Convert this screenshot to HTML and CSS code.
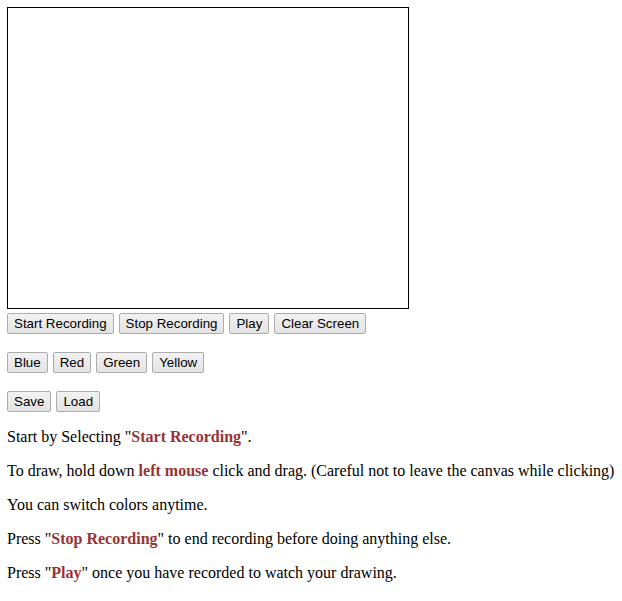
FILE: index.html
```html
<!DOCTYPE html>
<html>
<head>
<meta charset="utf-8">
<link rel="stylesheet" href="styles.css">
</head>
<body>
<div class="canvas"></div>
<div class="row row-first">
  <button class="btn">Start Recording</button>
  <button class="btn">Stop Recording</button>
  <button class="btn">Play</button>
  <button class="btn">Clear Screen</button>
</div>
<div class="row">
  <button class="btn">Blue</button>
  <button class="btn">Red</button>
  <button class="btn">Green</button>
  <button class="btn">Yellow</button>
</div>
<div class="row">
  <button class="btn">Save</button>
  <button class="btn">Load</button>
</div>
<div class="info">
  <p>Start by Selecting "<b class="hl">Start Recording</b>".</p>
  <p>To draw, hold down <b class="hl">left mouse</b> click and drag. (Careful not to leave the canvas while clicking)</p>
  <p>You can switch colors anytime.</p>
  <p>Press "<b class="hl">Stop Recording</b>" to end recording before doing anything else.</p>
  <p>Press "<b class="hl">Play</b>" once you have recorded to watch your drawing.</p>
</div>
</body>
</html>
```
FILE: styles.css
```css
html, body {
  background: #fff;
}
body {
  margin: 7px;
  font-family: "Liberation Serif", "Times New Roman", serif;
  font-size: 16px;
  color: #000;
}
.canvas {
  width: 400px;
  height: 300px;
  border: 1px solid #000;
}
.row {
  display: flex;
  gap: 5px;
  margin-top: 18px;
}
.row-first {
  margin-top: 4px;
}
.btn {
  font-family: "Liberation Sans", Arial, sans-serif;
  font-size: 13.33px;
  color: #000;
  height: 21px;
  padding: 0 6px;
  border: 1px solid #acacac;
  border-radius: 2px;
  background: linear-gradient(#f2f2f2, #e3e3e3);
  line-height: 19px;
}
.info {
  margin-top: 16px;
}
.info p {
  margin: 0 0 16px 0;
  white-space: nowrap;
}
.hl {
  color: #993333;
}
```
